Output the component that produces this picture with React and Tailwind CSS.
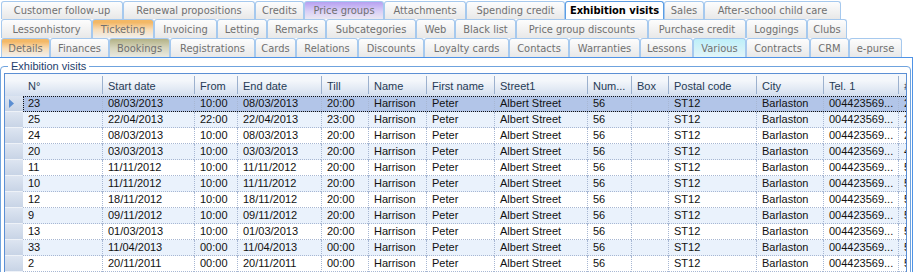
import React from 'react';

const V = {
  normal: 'bg-linear-to-b from-[#fdfdfd] to-[#e8e8e8] border-[#a6c9ee] text-[#707070] font-normal',
  selected: 'bg-white border-[#5b9de4] text-black font-bold',
  purple: 'bg-linear-to-b from-[#b7a0f1] via-[#d9cff6] via-55% to-[#ebe8f2] border-[#a6c9ee] text-[#707070] font-normal',
  orange: 'bg-linear-to-b from-[#f3b866] from-15% via-[#f8dfbb] via-55% to-[#efefef] border-[#a6c9ee] text-[#707070] font-normal',
  olive: 'bg-linear-to-b from-[#b3b286] via-[#d6d5bd] via-50% to-[#e9e9e1] border-[#a6c9ee] text-[#707070] font-normal',
  cyan: 'bg-linear-to-b from-[#bdeff9] to-[#e2f5f8] border-[#a6c9ee] text-[#707070] font-normal',
};

const tabRows = [
  {
    h: 'h-[19px] pt-[1px]',
    tabs: [
      ['Customer follow-up', 'w-[122px]'],
      ['Renewal propositions', 'w-[132px]'],
      ['Credits', 'w-[49px]'],
      ['Price groups', 'w-[80px]', 'purple'],
      ['Attachments', 'w-[82px]'],
      ['Spending credit', 'w-[99px]'],
      ['Exhibition visits', 'w-[99px]', 'selected'],
      ['Sales', 'w-[40px]'],
      ['After-school child care', 'w-[137px]'],
    ],
  },
  {
    h: 'h-[19px]',
    tabs: [
      ['Lessonhistory', 'w-[91px]'],
      ['Ticketing', 'w-[62px]', 'orange'],
      ['Invoicing', 'w-[63px]'],
      ['Letting', 'w-[50px]'],
      ['Remarks', 'w-[59px]'],
      ['Subcategories', 'w-[90px]'],
      ['Web', 'w-[39px]'],
      ['Black list', 'w-[61px]'],
      ['Price group discounts', 'w-[132px]'],
      ['Purchase credit', 'w-[98px]'],
      ['Loggings', 'w-[61px]'],
      ['Clubs', 'w-[40px]'],
    ],
  },
  {
    h: 'h-[19px]',
    tabs: [
      ['Details', 'w-[49px]', 'orange'],
      ['Finances', 'w-[59px]'],
      ['Bookings', 'w-[61px]', 'olive'],
      ['Registrations', 'w-[85px]'],
      ['Cards', 'w-[41px]'],
      ['Relations', 'w-[62px]'],
      ['Discounts', 'w-[66px]'],
      ['Loyalty cards', 'w-[85px]'],
      ['Contacts', 'w-[60px]'],
      ['Warranties', 'w-[71px]'],
      ['Lessons', 'w-[53px]'],
      ['Various', 'w-[53px]', 'cyan'],
      ['Contracts', 'w-[64px]'],
      ['CRM', 'w-[39px]'],
      ['e-purse', 'w-[53px]'],
    ],
  },
];

const cols = [
  ['N°', 'w-[79px]'],
  ['Start date', 'w-[92px]'],
  ['From', 'w-[43px]'],
  ['End date', 'w-[84px]'],
  ['Till', 'w-[47px]'],
  ['Name', 'w-[58px]'],
  ['First name', 'w-[68px]'],
  ['Street1', 'w-[93px]'],
  ['Num...', 'w-[44px]'],
  ['Box', 'w-[37px]'],
  ['Postal code', 'w-[88px]'],
  ['City', 'w-[67px]'],
  ['Tel. 1', 'w-[75px]'],
  ['#', 'w-[60px]'],
];

const base = (n, d1, t1, d2, t2, last) => [
  n, d1, t1, d2, t2, 'Harrison', 'Peter', 'Albert Street', '56', '', 'ST12', 'Barlaston', '004423569...', last,
];

const rows = [
  base('23', '08/03/2013', '10:00', '08/03/2013', '20:00', '2'),
  base('25', '22/04/2013', '22:00', '22/04/2013', '23:00', '2'),
  base('24', '08/03/2013', '10:00', '08/03/2013', '20:00', '2'),
  base('20', '03/03/2013', '10:00', '03/03/2013', '20:00', '4'),
  base('11', '11/11/2012', '10:00', '11/11/2012', '20:00', '5'),
  base('10', '11/11/2012', '10:00', '11/11/2012', '20:00', '5'),
  base('12', '18/11/2012', '10:00', '18/11/2012', '20:00', '5'),
  base('9', '09/11/2012', '10:00', '09/11/2012', '20:00', '5'),
  base('13', '01/03/2013', '10:00', '01/03/2013', '20:00', '5'),
  base('33', '11/04/2013', '00:00', '11/04/2013', '00:00', '5'),
  base('2', '20/11/2011', '00:00', '20/11/2011', '00:00', '5'),
];

function Tab({ label, w, v = 'normal' }) {
  return (
    <div
      className={`flex h-full shrink-0 items-center justify-center overflow-hidden whitespace-nowrap rounded-t-[3px] border border-b-0 text-[11px] leading-none ${w} ${V[v]}`}
    >
      {label}
    </div>
  );
}

export default function App() {
  return (
    <div className="h-[272px] w-[913px] overflow-hidden bg-white font-['DejaVu_Sans_Condensed','DejaVu_Sans',sans-serif]">
      {/* tab strip */}
      <div className="flex flex-col pl-[1px]">
        {tabRows.map((r, i) => (
          <div key={i} className={`flex ${r.h}`}>
            {r.tabs.map(([label, w, v]) => (
              <Tab key={label} label={label} w={w} v={v} />
            ))}
          </div>
        ))}
      </div>

      {/* tab page */}
      <div className="h-[215px] w-[913px] border-t border-r border-[#4f93e6] pt-[2px]">
        <fieldset className="w-[911px] rounded-t-[4px] border border-[#6fa3de] pb-[200px]">
          <legend className="ml-[7px] px-[3px] font-['Liberation_Sans',Arial,sans-serif] text-[11px] leading-[13px] text-[#1d3e6c]">
            Exhibition visits
          </legend>

          {/* data grid */}
          <div className="ml-[3px] w-[903px] overflow-hidden border border-[#5b8fd4] font-['Liberation_Sans',Arial,sans-serif] text-[11px]">
            {/* header */}
            <div className="flex h-[22px] bg-linear-to-b from-[#f4f7fb] from-30% to-[#d3deee]">
              <div className="w-[18px] shrink-0" />
              {cols.map(([h, w], ci) => (
                <div key={h} className={`flex shrink-0 ${w}`}>
                  {ci > 0 && <div className="my-[2px] w-px shrink-0 bg-[#9cb1ce]" />}
                  <div className="flex flex-1 items-center overflow-hidden whitespace-nowrap pl-[5px] pt-[3px] text-[#253a55]">
                    {h}
                  </div>
                </div>
              ))}
            </div>

            {/* rows */}
            {rows.map((r, ri) => {
              const sel = ri === 0;
              const bg = sel ? 'bg-[#b2c5e8]' : ri % 2 === 1 ? 'bg-[#eaf2fc]' : 'bg-white';
              return (
                <div key={ri} className="flex h-[16px]">
                  <div className="flex w-[18px] shrink-0 items-center border-b border-[#eef2f8] bg-linear-to-b from-[#dde5f1] to-[#c8d4e6] pl-[4px]">
                    {sel && (
                      <svg width="5" height="9" viewBox="0 0 5 9">
                        <path d="M0 0 L5 4.5 L0 9 Z" fill="#5a8ed2" />
                      </svg>
                    )}
                  </div>
                  <div
                    className={`flex ${bg} ${sel ? 'outline-1 outline-dotted outline-[#111] -outline-offset-1' : ''}`}
                  >
                    {r.map((c, ci) => (
                      <div
                        key={ci}
                        className={`flex shrink-0 items-center overflow-hidden whitespace-nowrap border-b border-dotted border-[#a7b7d3] pl-[5px] leading-none text-[#111] ${cols[ci][1]} ${ci > 0 ? 'border-l' : ''}`}
                      >
                        {c}
                      </div>
                    ))}
                  </div>
                </div>
              );
            })}
          </div>
        </fieldset>
      </div>
    </div>
  );
}
